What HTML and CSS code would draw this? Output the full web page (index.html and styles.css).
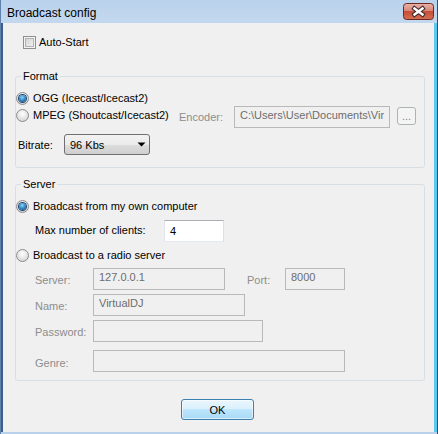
FILE: index.html
```html
<!DOCTYPE html>
<html lang="en">
<head>
    <meta charset="UTF-8">
    <title>Broadcast config</title>
    <link rel="stylesheet" href="styles.css">
</head>
<body>
    <div class="window">
        <div class="titlebar">
            <span class="title">Broadcast config</span>
            <button class="close-btn" aria-label="Close">
                <svg width="31" height="17" viewBox="0 0 31 17">
                    <defs>
                        <linearGradient id="closeGrad" x1="0" y1="0" x2="0" y2="1">
                            <stop offset="0" stop-color="#ebb4a7"/>
                            <stop offset="0.45" stop-color="#d9867a"/>
                            <stop offset="0.5" stop-color="#c64d36"/>
                            <stop offset="1" stop-color="#d66f52"/>
                        </linearGradient>
                    </defs>
                    <rect x="0.5" y="0.5" width="30" height="16" rx="3" fill="url(#closeGrad)" stroke="#6b2b24"/>
                    <path d="M11.5 5.5 L19.5 11.5 M19.5 5.5 L11.5 11.5" stroke="#3c2a2a" stroke-width="4.5" stroke-linecap="square"/>
                    <path d="M11.5 5.5 L19.5 11.5 M19.5 5.5 L11.5 11.5" stroke="#ffffff" stroke-width="2.4" stroke-linecap="square"/>
                </svg>
            </button>
        </div>

        <div class="client">
            <label class="check-row"><span class="checkbox"></span>Auto-Start</label>

            <fieldset class="group group-format">
                <legend>Format</legend>
                <div class="opt-row">
                    <span class="radio checked"></span>OGG (Icecast/Icecast2)
                </div>
                <div class="field-row encoder-row">
                    <span class="opt-label mpeg-opt"><span class="radio"></span>MPEG (Shoutcast/Icecast2)</span>
                    <span class="lbl disabled enc-lbl">Encoder:</span>
                    <input class="edit disabled enc-edit" type="text" value="C:\Users\User\Documents\VirtualDJ\Plugins\lame_enc.dll" disabled>
                    <button class="dots-btn" disabled>...</button>
                </div>
                <div class="field-row bitrate-row">
                    <span class="lbl bitrate-lbl">Bitrate:</span>
                    <div class="combo">
                        <span>96 Kbs</span>
                        <svg width="9" height="5" viewBox="0 0 9 5"><path d="M0.5 0.5 H8.5 L4.5 4.5 Z" fill="#000"/></svg>
                    </div>
                </div>
            </fieldset>

            <fieldset class="group group-server">
                <legend>Server</legend>
                <div class="opt-row">
                    <span class="radio checked"></span>Broadcast from my own computer
                </div>
                <div class="field-row clients-row">
                    <span class="lbl clients-lbl">Max number of clients:</span>
                    <input class="edit clients-edit" type="text" value="4">
                </div>
                <div class="opt-row radio-server">
                    <span class="radio"></span>Broadcast to a radio server
                </div>
                <div class="field-row server-row">
                    <span class="lbl disabled srv-lbl">Server:</span>
                    <input class="edit disabled host-edit" type="text" value="127.0.0.1" disabled>
                    <span class="lbl disabled port-lbl">Port:</span>
                    <input class="edit disabled port-edit" type="text" value="8000" disabled>
                </div>
                <div class="field-row name-row">
                    <span class="lbl disabled srv-lbl">Name:</span>
                    <input class="edit disabled name-edit" type="text" value="VirtualDJ" disabled>
                </div>
                <div class="field-row pass-row">
                    <span class="lbl disabled srv-lbl">Password:</span>
                    <input class="edit disabled pass-edit" type="password" value="" disabled>
                </div>
                <div class="field-row genre-row">
                    <span class="lbl disabled srv-lbl genre-lbl">Genre:</span>
                    <input class="edit disabled genre-edit" type="text" value="" disabled>
                </div>
            </fieldset>

            <div class="buttons">
                <button class="ok-btn">OK</button>
            </div>
        </div>
    </div>
</body>
</html>
```

FILE: styles.css
```css
* {
    box-sizing: border-box;
}
body {
    margin: 0;
    font-family: "Liberation Sans", Arial, sans-serif;
    font-size: 11px;
    color: #000;
    background: #fff;
}
.window {
    width: 438px;
    height: 434px;
    display: flex;
    flex-direction: column;
    background: #b9d1ea;
    border-left: 1px solid #5f82ab;
    border-right: 1px solid #2f4f72;
}
.titlebar {
    height: 23px;
    flex-shrink: 0;
    display: flex;
    align-items: center;
    justify-content: space-between;
    padding: 0 3px 0 6px;
    background: linear-gradient(#bad2ec, #c3d8ee);
}
.title {
    font-size: 12px;
    line-height: 14px;
    margin-top: 2px;
    color: #000;
}
.close-btn {
    width: 31px;
    height: 17px;
    padding: 0;
    border: none;
    background: none;
    display: block;
}
.close-btn svg {
    display: block;
}
.client {
    flex: 1;
    margin-bottom: 2px;
    background: #f0f0f0;
    border-left: 2px solid #3b5f8c;
    border-right: 3px solid #5cc8ef;
    padding: 13px 0 0 12px;
}
.check-row {
    display: flex;
    align-items: center;
    height: 13px;
    line-height: 13px;
    margin-left: 8px;
}
.checkbox {
    width: 13px;
    height: 13px;
    margin-right: 3px;
    border: 1px solid #8f8f8f;
    background: #f4f4f4;
    box-shadow: inset 0 0 0 1px #f4f4f4, inset 0 0 0 2px #aeb3b9;
    background-image: linear-gradient(135deg, #cfcfcf, #f7f7f7);
}

/* group boxes */
.group {
    width: 410px;
    margin: 0;
    padding: 0;
    min-inline-size: 0;
    border: 1px solid #d5dfe5;
    border-radius: 3px;
}
.group legend {
    margin-left: 5px;
    padding: 0 2px;
    line-height: 13px;
}
.group-format {
    margin-top: 21px;
    padding: 9px 0 12px 0;
}
.group-server {
    margin-top: 10px;
    padding: 9px 0 8px 0;
}

.opt-row, .opt-label {
    display: flex;
    align-items: center;
    height: 13px;
    line-height: 13px;
    white-space: nowrap;
}
.radio {
    width: 13px;
    height: 13px;
    margin-right: 4px;
    flex-shrink: 0;
    border-radius: 50%;
    border: 1px solid #8c8c8c;
    background: radial-gradient(circle at 50% 35%, #ffffff, #e6e6e6 50%, #cbcbcb);
    display: flex;
    align-items: center;
    justify-content: center;
}
.radio.checked::after {
    content: "";
    width: 7px;
    height: 7px;
    border-radius: 50%;
    background: radial-gradient(circle at 45% 35%, #8fd6f6, #2a7fc2 55%, #163f6e);
    box-shadow: 0 0 0 1px #1c4470;
}

.field-row {
    display: flex;
    align-items: center;
    height: 22px;
}
.lbl {
    white-space: nowrap;
    flex-shrink: 0;
}
.disabled {
    color: #8d8d8d;
}
.edit {
    height: 22px;
    font: inherit;
    margin: 0;
    padding: 0 5px;
    border: 1px solid;
    border-color: #abadb3 #dbdfe6 #e3e9ef #e2e3ea;
    background: #fff;
    color: #000;
    outline: none;
}
.edit.disabled {
    padding-bottom: 4px;
    border-color: #b9b9b9;
    background: #f0f0f0;
    color: #6d6d6d;
}

/* format group rows */
.encoder-row {
    margin-top: 1px;
}
.mpeg-opt {
    width: 163px;
    margin-bottom: 3px;
}
.enc-lbl {
    width: 55px;
}
.enc-edit {
    width: 156px;
    padding-left: 5px;
}
.dots-btn {
    width: 19px;
    height: 18px;
    margin-left: 7px;
    margin-top: -2px;
    padding: 0 0 3px 0;
    font: inherit;
    line-height: 10px;
    color: #838383;
    border: 1px solid #adb2b5;
    border-radius: 3px;
    background: #f4f4f4;
    display: flex;
    align-items: flex-end;
    justify-content: center;
}
.bitrate-row {
    margin-top: 6px;
    height: 21px;
}
.bitrate-lbl {
    width: 46px;
    margin-left: 2px;
}
.combo {
    width: 86px;
    height: 21px;
    display: flex;
    align-items: center;
    justify-content: space-between;
    padding: 0 3px 0 5px;
    border: 1px solid #707070;
    border-radius: 3px;
    background: linear-gradient(#f2f2f2, #ebebeb 50%, #dddddd 50%, #cfcfcf);
}
.combo svg {
    display: block;
}

/* server group rows */
.clients-row {
    margin-top: 7px;
}
.clients-lbl {
    width: 129px;
    margin-left: 19px;
    margin-top: -3px;
}
.clients-edit {
    width: 60px;
}
.radio-server {
    margin-top: 7px;
}
.server-row {
    margin-top: 6px;
}
.srv-lbl {
    width: 58px;
    margin-left: 19px;
    margin-top: 1px;
}
.host-edit {
    width: 132px;
}
.port-lbl {
    width: 38px;
    margin-left: 22px;
    margin-top: 1px;
}
.port-edit {
    width: 60px;
}
.name-row, .pass-row {
    margin-top: 4px;
}
.name-edit {
    width: 152px;
}
.pass-edit {
    width: 170px;
}
.genre-row {
    margin-top: 8px;
}
.genre-lbl {
    margin-top: 4px;
}
.genre-edit {
    width: 252px;
}

.buttons {
    display: flex;
    margin-top: 18px;
    padding-left: 166px;
}
.ok-btn {
    width: 73px;
    height: 21px;
    padding: 0;
    font: inherit;
    color: #000;
    border: 1px solid #3c7fb1;
    border-radius: 3px;
    background: linear-gradient(#eaf6fd, #d9f0fc 50%, #bee6fd 50%, #a7d9f5);
    box-shadow: inset 0 0 0 1px rgba(255, 255, 255, 0.55);
}
```
